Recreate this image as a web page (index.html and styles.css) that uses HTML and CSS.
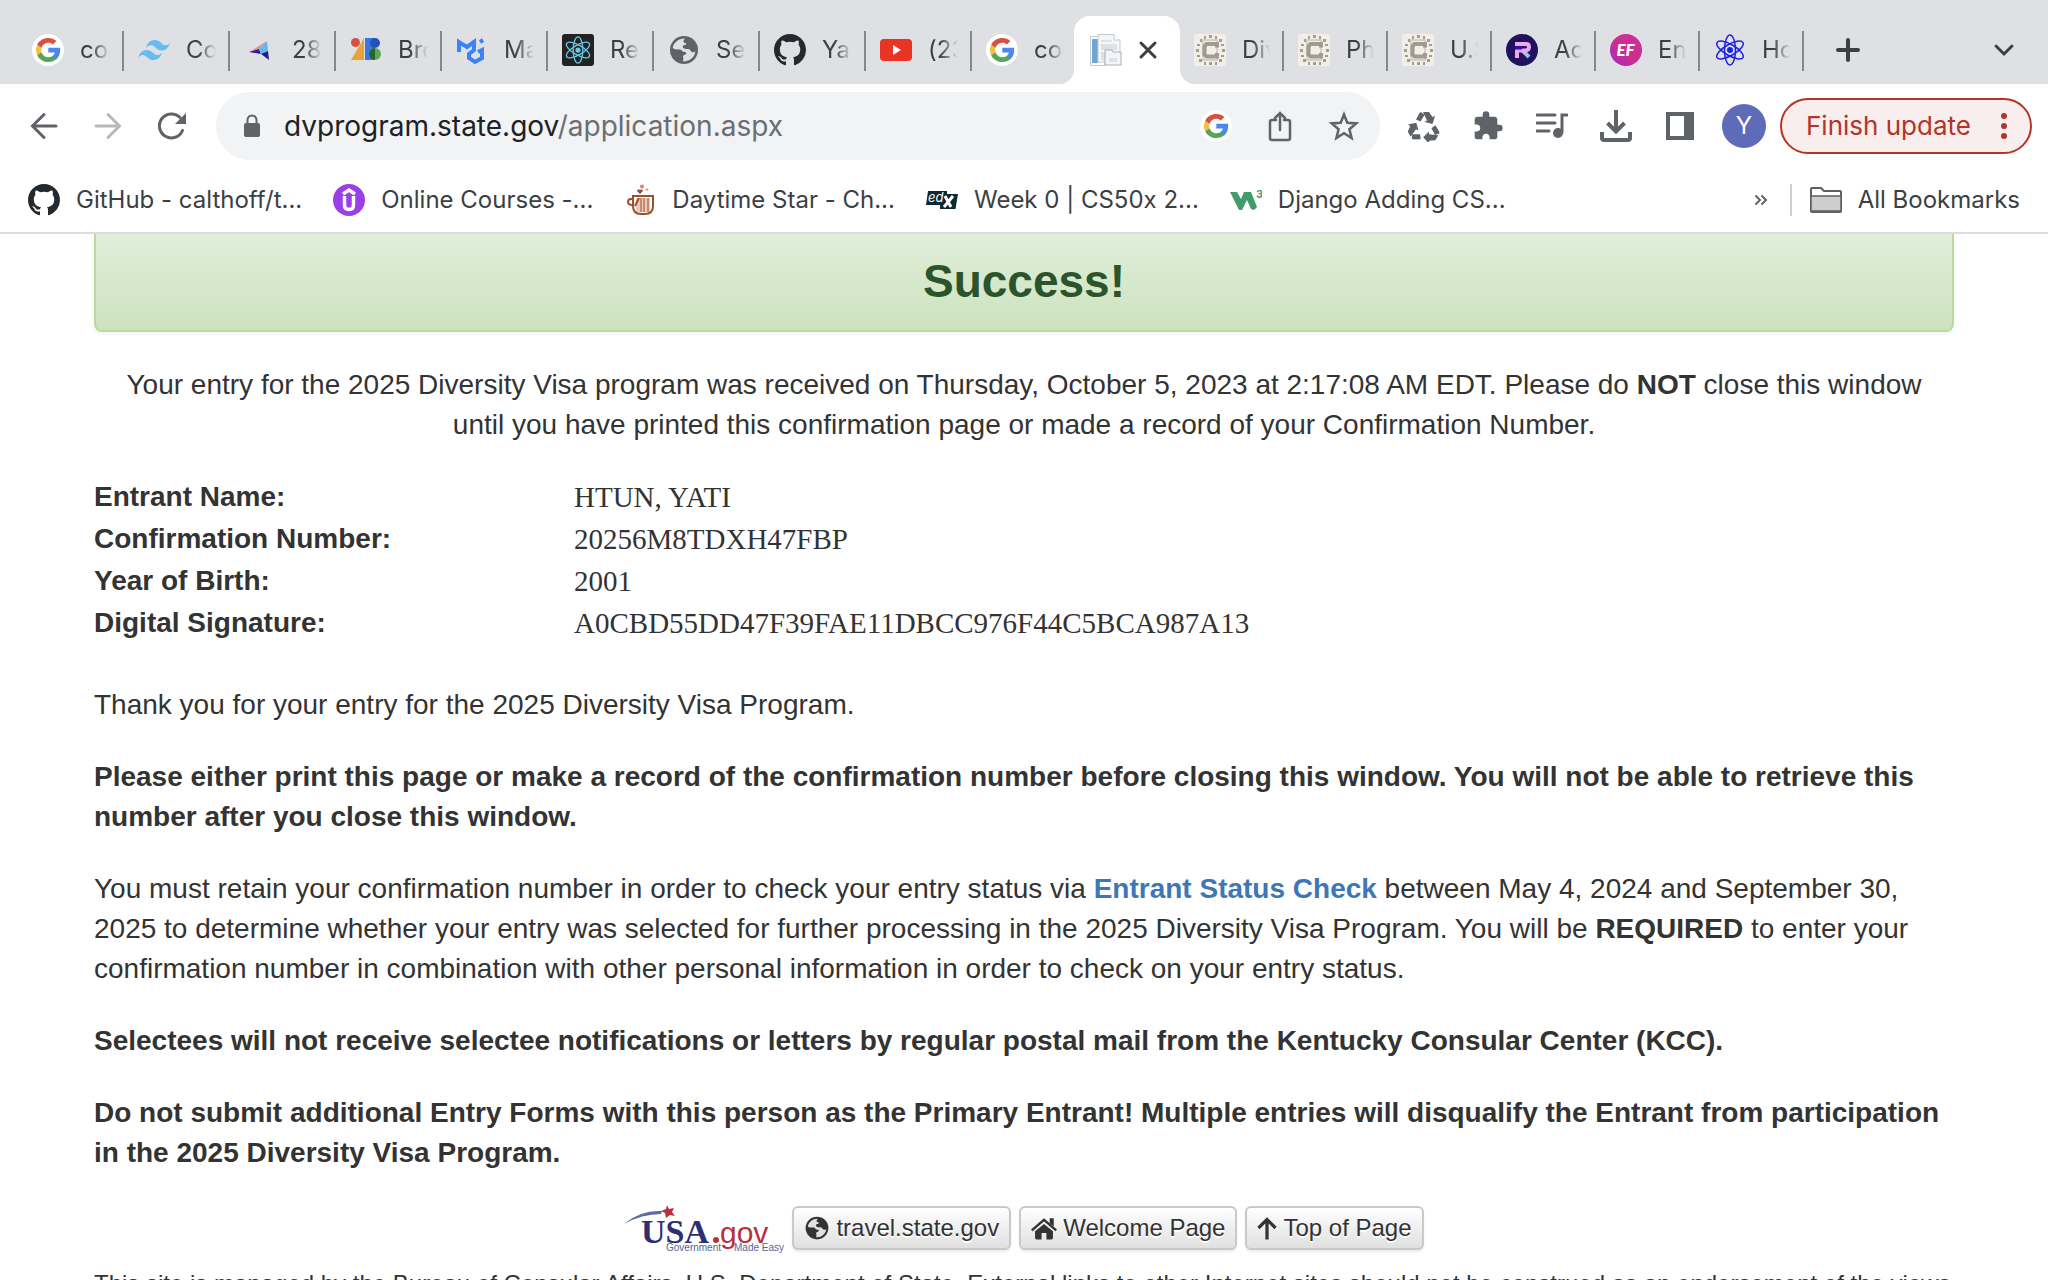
FILE: index.html
```html
<!DOCTYPE html>
<html lang="en">
<head>
<meta charset="utf-8">
<title>Diversity Visa Entry Confirmation</title>
<link rel="stylesheet" href="styles.css">
</head>
<body>
<svg class="defs" aria-hidden="true">
  <symbol id="google" viewBox="0 0 32 32">
    <circle cx="16" cy="16" r="16" fill="#fff"/>
    <path fill="#4c86ee" d="M28 13.800H16.300v4.700h6.600c-.4 1.600-1.300 2.800-2.500 3.600v3.100h4.100c2.400-2.200 3.700-5.400 3.700-9.200 0-.8-.1-1.500-.2-2.200z"/>
    <path fill="#56a65a" d="M16.300 28c3.300 0 6.100-1.100 8.200-2.900l-4-3.100c-1.100.8-2.500 1.200-4.200 1.200-3.200 0-5.900-2.100-6.900-5H5.300v3.200C7.300 25.400 11.500 28 16.300 28z"/>
    <path fill="#f1bf42" d="M9.400 18.200c-.5-1.500-.5-3 0-4.500v-3.200H5.300c-1.700 3.500-1.700 7.500 0 10.900z"/>
    <path fill="#d85040" d="M16.300 8.700c1.800 0 3.400.6 4.600 1.800l3.500-3.400C22.200 5.100 19.500 4 16.300 4 11.500 4 7.300 6.600 5.300 10.500l4.100 3.200c1-2.900 3.700-5 6.900-5z"/>
  </symbol>
  <symbol id="github" viewBox="0 0 16 16">
    <path fill="#24292e" d="M8 0C3.580 0 0 3.580 0 8c0 3.540 2.290 6.530 5.470 7.590.4.070.55-.17.55-.38 0-.19-.01-.82-.01-1.490-2.010.37-2.530-.49-2.690-.94-.09-.23-.48-.94-.82-1.130-.28-.15-.68-.52-.01-.53.63-.01 1.080.58 1.230.82.72 1.210 1.870.87 2.330.66.070-.52.28-.87.51-1.070-1.780-.2-3.640-.89-3.640-3.950 0-.87.31-1.590.82-2.150-.08-.2-.36-1.020.08-2.120 0 0 .67-.21 2.200.82.64-.18 1.320-.27 2-.27s1.360.09 2 .27c1.530-1.040 2.200-.82 2.200-.82.44 1.100.16 1.920.08 2.120.51.56.82 1.270.82 2.150 0 3.070-1.870 3.750-3.650 3.950.29.25.54.73.54 1.480 0 1.070-.01 1.930-.01 2.200 0 .21.15.46.55.38A8.010 8.010 0 0 0 16 8c0-4.420-3.580-8-8-8z"/>
  </symbol>
  <symbol id="globe" viewBox="0 0 32 32">
    <circle cx="16" cy="16" r="14" fill="currentColor"/>
    <path class="land" d="M17 4.500c-6-.3-11.500 4-12.300 9.500 2.500 2 5.300 1.300 7.500 1.500 2 .2 1.300 2 3 2.300 1.500.2 3 0 3 1.700 0 1.500-3 1.200-3.200 2.800-.2 1.600 1.200 3.500-.2 5 5.800.8 11.800-3.400 12.600-9.700-1.700 1-3.900.8-4.600-.6-.7-1.600-2-2-3.600-2-2 0-4.400-.2-4.400-2.200 0-2.200 2.200-1.300 3.200-2.300.8-.8-.2-1.800-1.600-1.800-1.300 0-1.400-2.600.6-4.200z"/>
  </symbol>
  <symbol id="consular" viewBox="0 0 32 32">
    <rect width="32" height="32" rx="3" fill="#f3eee6"/>
    <path fill="#a39e95" d="M10 2h2v3h-2zm5-1h3v3h-3zm6 1h2v3h-2zM6 5h2v3H6zm19 0h3v3h-3zM3 10h3v2H3zm24 0h3v2h-3zM2 15h3v3H2zm26 0h3v3h-3zM3 21h3v2H3zm24 0h3v2h-3zM5 25h3v3H5zm20 0h3v3h-3zM10 28h2v3h-2zm5 0h3v3h-3zm6 0h2v3h-2z"/>
    <path fill="none" stroke="#d5d0c7" stroke-width="2" d="M9 6h14v20H9z"/>
    <path fill="none" stroke="#9f9a92" stroke-width="4" d="M23 13.500V10H12.500L10.500 12.500v8l2 2H23V19"/>
  </symbol>
  <symbol id="atom" viewBox="0 0 32 32">
    <circle cx="16" cy="16" r="3" fill="currentColor"/>
    <g fill="none" stroke="currentColor" stroke-width="1.500">
      <ellipse cx="16" cy="16" rx="15" ry="5.500" transform="rotate(30 16 16)"/>
      <ellipse cx="16" cy="16" rx="15" ry="5.500" transform="rotate(90 16 16)"/>
      <ellipse cx="16" cy="16" rx="15" ry="5.500" transform="rotate(150 16 16)"/>
    </g>
  </symbol>
  <symbol id="arrow-arm" viewBox="0 0 32 32">
    <path d="M8 9.500 11.500 3 13 2l3.500 3-4 6.500zM15 2h6l3.500 5 2.500-1-2.500 8-8-2 2.500-1.500z"/>
  </symbol>
</svg>

<header class="chrome">
  <nav class="tabs" aria-label="Tabs">
    <a class="tab" href="#"><svg><use href="#google"/></svg><span>cod</span></a>
    <a class="tab" href="#"><svg viewBox="0 0 32 32"><path fill="#65bbf2" d="M8 14q2-8 8.500-8c6 0 6.500 4 10 5.200q3 .8 5.500-2.200-2.500 7.500-8 7.500c-5.500 0-6.500-4.300-10-5.200Q10.500 10.500 8 14zM0 23.500Q2.500 16 8.500 16c5.500 0 6.500 4 10 5q3.200.6 5.500-2.500-2 7.500-8.500 7.500c-5.500 0-6-3.800-9.500-4.800Q3 20.500 0 23.500z"/></svg><span>Coc</span></a>
    <a class="tab" href="#"><svg viewBox="0 0 32 32"><path fill="#e98b87" d="M23 7 5 18l10-3z"/><path fill="#2b1d8c" d="m5 18 10-3 2 5z"/><path fill="#61b7ee" d="m23 7-8 8 2 5 7-3z"/><path fill="#1c1f91" d="m17 20 7-3 1 9z"/></svg><span>286</span></a>
    <a class="tab" href="#"><svg viewBox="0 0 32 32"><path fill="#e8a23a" d="M14 4v22H1z"/><path fill="#3a75e6" d="M15 4h10v22H15z"/><circle cx="5.500" cy="8.500" r="4.500" fill="#d9503f"/><circle cx="25" cy="9" r="5" fill="#2552b5"/><circle cx="25" cy="20" r="6" fill="#5aa85c"/><path fill="#27632f" d="M25 14v12a6 6 0 0 1 0-12z"/></svg><span>Bro</span></a>
    <a class="tab" href="#"><svg viewBox="0 0 32 32"><path fill="none" stroke="#3b82f6" stroke-width="4" d="M3 18V8l8 5 7-5v8l-5 4v4l6 4 7-4v-8l-4 2M24 8l3-2"/></svg><span>Mat</span></a>
    <a class="tab" href="#"><svg viewBox="0 0 32 32" class="react"><rect width="32" height="32" rx="3" fill="#222"/><use href="#atom" x="2" y="2" width="28" height="28"/></svg><span>Rea</span></a>
    <a class="tab" href="#"><svg class="grey"><use href="#globe"/></svg><span>Sea</span></a>
    <a class="tab" href="#"><svg><use href="#github"/></svg><span>Yat</span></a>
    <a class="tab" href="#"><svg viewBox="0 0 32 32"><rect y="5" width="32" height="22" rx="4" fill="#e93323"/><path fill="#fff" d="m13 11 8 5-8 5z"/></svg><span>(23)</span></a>
    <a class="tab last" href="#"><svg><use href="#google"/></svg><span>cod</span></a>
    <div class="tab active">
      <svg viewBox="0 0 32 32"><path fill="#fff" stroke="#c9cdd3" d="M.5 2.500h14v29H.5z"/><path fill="#6ea5d2" d="M2 5h6v24H2z"/><path fill="#f5f6f8" stroke="#c5c9cf" d="M8 .5h16l6 6V28H8z"/><path fill="#fff" stroke="#c5c9cf" d="M24 .5V6h6"/><path fill="#dde0e5" d="M11 6h11v2H11zm0 4h16v6H11zm0 8h6v8h-6z"/><path fill="#f4f5f9" stroke="#a9afba" d="M15 20v-4h7l1 2h8v13H15z"/><path fill="#dde1ee" d="M19 24h8v4h-8z"/></svg>
      <button class="plain" aria-label="Close tab"><svg viewBox="0 0 32 32"><path class="line" stroke-width="3" d="m9 9 14 14M23 9 9 23"/></svg></button>
    </div>
    <a class="tab narrow" href="#"><svg><use href="#consular"/></svg><span>Div</span></a>
    <a class="tab narrow" href="#"><svg><use href="#consular"/></svg><span>Pho</span></a>
    <a class="tab narrow" href="#"><svg><use href="#consular"/></svg><span>U.S</span></a>
    <a class="tab narrow" href="#"><svg viewBox="0 0 32 32"><defs><linearGradient id="rg" x2="1" y2="1"><stop stop-color="#f2a9e8"/><stop offset=".6" stop-color="#eea6ee"/><stop offset="1" stop-color="#5fd0fb"/></linearGradient></defs><circle cx="16" cy="16" r="16" fill="#20135c"/><path fill="none" stroke="url(#rg)" stroke-width="4" stroke-linejoin="round" d="M9 10h11q3 0 3 3t-3 3.500h-9V24M17 17l6 6"/><path stroke="#1b12e8" stroke-width="3" d="M9 14h7"/></svg><span>Acc</span></a>
    <a class="tab narrow" href="#"><svg viewBox="0 0 32 32"><defs><linearGradient id="ef" y1="1" x2="1" y2="0"><stop stop-color="#a32bc4"/><stop offset=".5" stop-color="#cf2e8c"/><stop offset="1" stop-color="#c6309c"/></linearGradient></defs><circle cx="16" cy="16" r="16" fill="url(#ef)"/><text x="15.500" y="22" text-anchor="middle" class="ef">EF</text></svg><span>Eng</span></a>
    <a class="tab narrow" href="#"><svg class="blue"><use href="#atom"/></svg><span>Hov</span></a>
    <button class="plain newtab" aria-label="New tab"><svg viewBox="0 0 32 32"><path class="line" stroke-width="4" d="M16 6v20M6 16h20"/></svg></button>
    <button class="plain search" aria-label="Search tabs"><svg viewBox="0 0 32 32"><path class="line" stroke-width="3" d="m8 12 8 8 8-8"/></svg></button>
  </nav>

  <div class="toolbar">
    <div class="nav">
      <button class="plain" aria-label="Back"><svg viewBox="0 0 32 32"><path class="line" stroke-width="3" d="M28 16H5M16 4.500 4.500 16 16 27.500"/></svg></button>
      <button class="plain faded" aria-label="Forward"><svg viewBox="0 0 32 32"><path class="line" stroke-width="3" d="M4 16h23M16 4.500 27.500 16 16 27.500"/></svg></button>
      <button class="plain" aria-label="Reload"><svg viewBox="0 0 32 32"><path class="line" stroke-width="3" d="M26.500 20.500A12 12 0 1 1 24 7.500"/><path fill="currentColor" d="M30 3v11H19z"/></svg></button>
    </div>
    <div class="omnibox">
      <svg viewBox="0 0 32 32"><rect x="8" y="13" width="16" height="14" rx="2" fill="currentColor"/><path fill="none" stroke="currentColor" stroke-width="2" d="M11.500 14v-4a4.500 4.500 0 0 1 9 0v4"/></svg>
      <a class="url" href="#"><b>dvprogram.state.gov</b>/application.aspx</a>
      <button class="plain" aria-label="Google"><svg><use href="#google"/></svg></button>
      <button class="plain" aria-label="Share"><svg viewBox="0 0 32 32"><path class="line" stroke-width="2.500" d="M12 10H8q-2 0-2 2v16q0 2 2 2h16q2 0 2-2V12q0-2-2-2h-4M16 20V4m-5 4 5-5 5 5"/></svg></button>
      <button class="plain" aria-label="Bookmark"><svg viewBox="0 0 32 32"><path fill="none" stroke="currentColor" stroke-width="2.500" d="m16 4.500 3.300 8.300 9 .6-6.900 5.800 2.200 8.800L16 23.200 8.400 28l2.200-8.800-6.900-5.800 9-.6z"/></svg></button>
    </div>
    <div class="actions">
      <button class="plain" aria-label="Recycle"><svg viewBox="0 0 32 32" fill="currentColor"><use href="#arrow-arm" width="32" height="32"/><use href="#arrow-arm" width="32" height="32" transform="rotate(120 16 18)"/><use href="#arrow-arm" width="32" height="32" transform="rotate(240 16 18)"/></svg></button>
      <button class="plain" aria-label="Extensions"><svg viewBox="0 0 24 24"><path fill="currentColor" d="M20.500 11H19V7c0-1.100-.9-2-2-2h-4V3.500a2.500 2.500 0 0 0-5 0V5H4c-1.100 0-1.990.9-1.990 2v3.800H3.500c1.490 0 2.700 1.210 2.700 2.700s-1.210 2.700-2.700 2.700H2V20c0 1.100.9 2 2 2h3.800v-1.500c0-1.490 1.210-2.700 2.700-2.700s2.700 1.210 2.700 2.700V22H17c1.100 0 2-.9 2-2v-4h1.500a2.500 2.500 0 0 0 0-5z"/></svg></button>
      <button class="plain" aria-label="Media"><svg viewBox="0 0 32 32"><path class="line" stroke-width="3" d="M1 5h18M1 13h18M1 21h12M31 5h-5v17"/><circle cx="22" cy="23" r="5" fill="currentColor"/></svg></button>
      <button class="plain" aria-label="Downloads"><svg viewBox="0 0 32 32"><path fill="none" stroke="currentColor" stroke-width="4" d="M16 0v20M7.500 13l8.500 8.500 8.500-8.500M2 22v6q0 2 2 2h24q2 0 2-2v-6"/></svg></button>
      <button class="plain" aria-label="Side panel"><svg viewBox="0 0 32 32"><path fill="currentColor" fill-rule="evenodd" d="M2 2h28v28H2zm4 4v20h14V6z"/></svg></button>
    </div>
    <button class="avatar">Y</button>
    <button class="update">Finish update<svg viewBox="0 0 8 28"><g fill="currentColor"><circle cx="4" cy="4" r="3"/><circle cx="4" cy="14" r="3"/><circle cx="4" cy="24" r="3"/></g></svg></button>
  </div>

  <nav class="bookmarks" aria-label="Bookmarks">
    <a href="#"><svg><use href="#github"/></svg>GitHub - calthoff/t...</a>
    <a href="#"><svg viewBox="0 0 32 32"><circle cx="16" cy="16" r="16" fill="#9a40e8"/><path fill="none" stroke="#fff" stroke-width="3.500" d="m10 10 6-4 6 4M11.500 12v9q0 4.500 4.500 4.500t4.500-4.500v-9"/></svg>Online Courses -...</a>
    <a href="#"><svg viewBox="0 0 32 32"><path fill="#f0c9b0" d="M12 14h14v14H12z"/><path fill="none" stroke="#98502f" stroke-width="2" d="M9 12h20v10q0 8-8 8h-4q-8 0-8-8zM9 15H7q-3 0-3 3t5 3M15 14l-4 8"/><path stroke="#98502f" d="M17 14v14m3-14v14m4-14v14"/><path fill="#98502f" d="m16 10-3-3q1-3 3-1 2-2 3 1z"/><circle cx="18" cy="2.500" r="2" fill="#c58a6c"/><circle cx="23" cy="5.500" r="1.500" fill="#dbb09a"/></svg>Daytime Star - Ch...</a>
    <a href="#"><svg viewBox="0 0 32 32"><path fill="#0e2a33" d="M2 7h19v3h11l-2.500 15H14v-4H0z"/><text x="2" y="18" class="edx">ed</text><path stroke="#fff" stroke-width="3" d="m19 12 6 11m2-11-9 11"/></svg>Week 0 | CS50x 2...</a>
    <a href="#"><svg viewBox="0 0 32 32"><path fill="#429b6b" d="M0 8h7l4 7 3-7h7l6 15-3 3-3-1-4-9-5 10h-3z"/><text x="26" y="14" class="w3">3</text></svg>Django Adding CS...</a>
    <button class="plain more" aria-label="More bookmarks"><svg viewBox="0 0 16 16"><path class="line" stroke-width="2" d="m3 4 4 4-4 4M9 4l4 4-4 4"/></svg></button>
    <a class="all" href="#"><svg viewBox="0 0 32 32"><path fill="#fff" stroke="#5f5f5f" stroke-width="2" d="M1 27V5q0-1 1-1h9l3 3h16q1 0 1 1v19q0 1-1 1H2q-1 0-1-1z"/><path fill="#cecece" stroke="#5f5f5f" stroke-width="1.500" d="M1 12h30v15H1z"/></svg>All Bookmarks</a>
  </nav>
</header>

<main class="page">
  <div class="alert"><h1>Success!</h1></div>
  <p class="center">Your entry for the 2025 Diversity Visa program was received on Thursday, October 5, 2023 at 2:17:08 AM EDT. Please do <strong>NOT</strong> close this window until you have printed this confirmation page or made a record of your Confirmation Number.</p>
  <dl class="entry">
    <dt>Entrant Name:</dt><dd>HTUN, YATI</dd>
    <dt>Confirmation Number:</dt><dd>20256M8TDXH47FBP</dd>
    <dt>Year of Birth:</dt><dd>2001</dd>
    <dt>Digital Signature:</dt><dd>A0CBD55DD47F39FAE11DBCC976F44C5BCA987A13</dd>
  </dl>
  <p>Thank you for your entry for the 2025 Diversity Visa Program.</p>
  <p><strong>Please either print this page or make a record of the confirmation number before closing this window. You will not be able to retrieve this number after you close this window.</strong></p>
  <p>You must retain your confirmation number in order to check your entry status via <a href="#">Entrant Status Check</a> between May 4, 2024 and September 30, 2025 to determine whether your entry was selected for further processing in the 2025 Diversity Visa Program. You will be <strong>REQUIRED</strong> to enter your confirmation number in combination with other personal information in order to check on your entry status.</p>
  <p><strong>Selectees will not receive selectee notifications or letters by regular postal mail from the Kentucky Consular Center (KCC).</strong></p>
  <p><strong>Do not submit additional Entry Forms with this person as the Primary Entrant! Multiple entries will disqualify the Entrant from participation in the 2025 Diversity Visa Program.</strong></p>
  <div class="links">
    <a href="#" aria-label="USA.gov"><svg class="usa" viewBox="0 0 160 52"><path fill="#5c6a9c" d="M0 19Q16 5 38 6l-1 3Q18 9 0 19z"/><text x="17" y="38" class="u1">USA</text><path fill="#b6313f" d="m43 0 2 4 5-1-2 4 3 4-5-1-4 3-1-5-4-2 5-2z"/><circle cx="92" cy="35" r="3" fill="#b6313f"/><text x="96" y="38" class="u2">gov</text><text x="42" y="46" class="u3">Government</text><text x="110" y="46" class="u3">Made Easy</text></svg></a>
    <a class="btn" href="#"><svg><use href="#globe"/></svg>travel.state.gov</a>
    <a class="btn" href="#"><svg viewBox="0 0 32 32"><path fill="currentColor" d="M16 11 27 20v8q0 2-2 2h-6v-8h-6v8H7q-2 0-2-2v-8z"/><path fill="none" stroke="currentColor" stroke-width="3" d="m1 19 15-13 15 13"/><path fill="currentColor" d="M23 4h5v10l-5-4z"/></svg>Welcome Page</a>
    <a class="btn" href="#"><svg class="slim" viewBox="0 0 24 32"><path fill="none" stroke="currentColor" stroke-width="4" d="M12 30V6M1.500 16 12 5.500 22.500 16"/></svg>Top of Page</a>
  </div>
  <p class="foot">This site is managed by the Bureau of Consular Affairs, U.S. Department of State. External links to other Internet sites should not be construed as an endorsement of the views or privacy policies contained therein.</p>
</main>
</body>
</html>
```
FILE: styles.css
```css
* { box-sizing: border-box; }
body {
  margin: 0;
  height: 100vh;
  overflow: hidden;
  display: flex;
  flex-direction: column;
  background: #fff;
  color: #333;
  font: 28px/40px "Liberation Sans", Arial, sans-serif;
}
svg { width: 32px; height: 32px; flex: none; display: block; }
.defs { position: absolute; width: 0; height: 0; }
a { text-decoration: none; }
.line { fill: none; stroke: currentColor; stroke-linecap: round; stroke-linejoin: miter; }
.plain { border: 0; padding: 0; background: none; color: inherit; display: flex; }
.land { fill: #dfe0e4; }

.chrome {
  flex: none;
  border-bottom: 2px solid #dadce0;
  color: #5f6368;
  font: 24px/32px Inter, "Noto Sans", sans-serif;
  font-feature-settings: "calt" 0;
}
.tabs {
  display: flex;
  align-items: flex-end;
  height: 84px;
  padding-left: 18px;
  background: #dfe0e4;
}
.tab {
  width: 106px;
  height: 68px;
  padding: 0 14px;
  display: flex;
  align-items: center;
  gap: 16px;
  color: #3c4043;
  background: linear-gradient(#85888c, #85888c) right 15px / 2px 40px no-repeat;
}
.tab span {
  overflow: hidden;
  white-space: nowrap;
  -webkit-mask-image: linear-gradient(90deg, #000 40%, transparent);
  mask-image: linear-gradient(90deg, #000 40%, transparent);
}
.tab.narrow { width: 104px; }
.tab.last { width: 102px; padding-right: 10px; background: none; }
.tab.active {
  position: relative;
  background: #fff;
  border-radius: 16px 16px 0 0;
  gap: 10px;
  padding: 0 14px 0 16px;
}
.tab.active::before, .tab.active::after {
  content: "";
  position: absolute;
  bottom: 0;
  width: 16px;
  height: 16px;
}
.tab.active::before { left: -16px; background: radial-gradient(circle at 0 0, transparent 16px, #fff 17px); }
.tab.active::after { right: -16px; background: radial-gradient(circle at 100% 0, transparent 16px, #fff 17px); }
.grey { color: #5f6368; }
.react { color: #67c7e5; }
.blue { color: #1b22e6; }
.ef { font: italic 900 17px Lato, sans-serif; fill: #fff; }
.newtab { margin: 0 0 18px 28px; color: #3c4043; }
.search { margin: 0 28px 18px auto; color: #3c4043; }

.toolbar {
  display: flex;
  align-items: center;
  height: 84px;
  padding: 0 16px 0 28px;
}
.nav { display: flex; gap: 32px; margin-right: 28px; }
.faded { opacity: .45; }
.omnibox {
  flex: 1;
  height: 68px;
  padding: 0 20px;
  display: flex;
  align-items: center;
  gap: 32px;
  border-radius: 34px;
  background: #f1f3f4;
}
.url { flex: 1; margin-left: -16px; font-size: 28px; color: #6b6e72; }
.url b { font-weight: 400; color: #202124; }
.actions { display: flex; gap: 32px; margin: 0 26px 0 28px; }
.avatar {
  width: 44px;
  height: 44px;
  padding: 0;
  border: 0;
  border-radius: 50%;
  background: #5f6ab9;
  color: #fff;
  font: 24px/44px Inter, sans-serif;
}
.update {
  width: 252px;
  height: 56px;
  margin-left: 14px;
  padding: 0 22px 0 24px;
  display: flex;
  align-items: center;
  justify-content: space-between;
  border: 2px solid #b3342a;
  border-radius: 28px;
  background: #f8eeed;
  color: #b3342a;
  font: 26px/32px Inter, sans-serif;
}
.update svg { width: 8px; height: 28px; }

.bookmarks {
  display: flex;
  align-items: center;
  height: 64px;
  padding: 0 28px;
  gap: 31px;
}
.bookmarks a { display: flex; align-items: center; gap: 16px; color: #3c4043; white-space: nowrap; }
.edx { font: italic 13px Inter, sans-serif; fill: #fff; }
.w3 { font: 700 11px Inter, sans-serif; fill: #429b6b; }
.more { margin-left: auto; margin-right: -10px; }
.more svg { width: 16px; height: 16px; }
.bookmarks .all { padding-left: 18px; border-left: 2px solid #d0d0d0; }

.page { flex: 1; min-height: 0; overflow: hidden; padding: 0 94px; }
.alert {
  height: 98px;
  padding-top: 19px;
  border: 2px solid #b8dba6;
  border-top: 0;
  border-radius: 0 0 8px 8px;
  background: linear-gradient(#e0eed9, #cde3bf);
  box-shadow: 0 2px 4px rgba(0, 0, 0, .05);
  text-align: center;
}
h1 { margin: 0; font-size: 46px; line-height: 56px; color: #2b542c; }
p { margin: 32px 0; }
.center { margin: 33px 0 0; padding: 0 16px; text-align: center; }
.page p a { color: #3f76b5; font-weight: 700; }
.entry {
  display: grid;
  grid-template-columns: 480px 1fr;
  margin: 31px 0 41px;
  line-height: 42px;
}
dt { font-weight: 700; }
dd { margin: 0; font-family: "Liberation Serif", serif; font-size: 29px; }
.links { display: flex; justify-content: center; gap: 8px; margin-top: 32px; }
.usa { width: 160px; height: 52px; overflow: visible; }
.u1 { font: 700 34px "Liberation Serif", serif; fill: #2d2f73; }
.u2 { font: 30px "Liberation Sans", sans-serif; fill: #b6313f; }
.u3 { font: 10px "Liberation Sans", sans-serif; fill: #5c5f96; }
.btn {
  height: 44px;
  margin-top: 1px;
  padding: 0 10px;
  display: flex;
  align-items: center;
  gap: 6px;
  border: 2px solid #c9c9c9;
  border-radius: 6px;
  background: linear-gradient(#fff, #e0e0e0);
  box-shadow: 0 2px 2px rgba(0, 0, 0, .08);
  text-shadow: 0 2px 0 #fff;
  color: #333;
  font-size: 24px;
}
.btn svg { width: 26px; height: 26px; }
.btn .slim { width: 20px; }
.foot { margin: 11px 0 0; font-size: 24px; line-height: 32px; }
```
